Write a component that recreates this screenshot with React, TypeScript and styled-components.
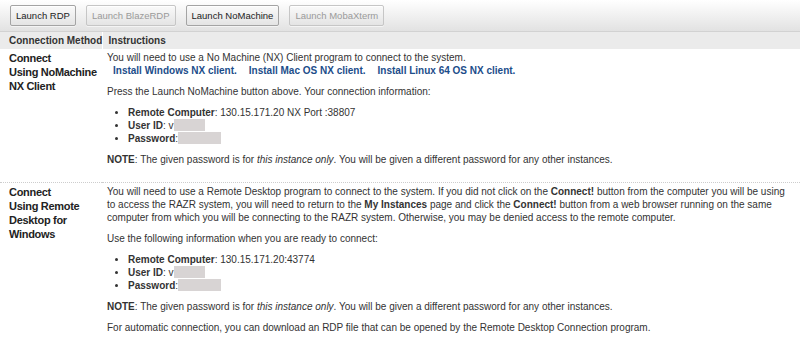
import React from "react";
import styled, { createGlobalStyle } from "styled-components";

const GlobalStyle = createGlobalStyle`
  html, body {
    margin: 0;
    padding: 0;
    background: #fff;
  }
  body {
    font-family: "Liberation Sans", Arial, sans-serif;
    font-size: 10px;
    color: #333;
  }
`;

export default function App() {
  return (
    <>
      <GlobalStyle />
      <Page>
        <Toolbar>
          <LaunchButton>Launch RDP</LaunchButton>
          <LaunchButton disabled>Launch BlazeRDP</LaunchButton>
          <LaunchButton>Launch NoMachine</LaunchButton>
          <LaunchButton disabled>Launch MobaXterm</LaunchButton>
        </Toolbar>

        <Table>
          <colgroup>
            <col style={{ width: 102 }} />
            <col />
          </colgroup>
          <thead>
            <tr>
              <Th $first>Connection Method</Th>
              <Th>Instructions</Th>
            </tr>
          </thead>
          <tbody>
            <Row>
              <MethodCell>
                Connect
                <br />
                Using NoMachine
                <br />
                NX Client
              </MethodCell>
              <InfoCell>
                <P>
                  You will need to use a No Machine (NX) Client program to connect to the system.
                  <br />
                  <Links>
                    <Link href="#">Install Windows NX client.</Link>
                    <Link href="#">Install Mac OS NX client.</Link>
                    <Link href="#">Install Linux 64 OS NX client.</Link>
                  </Links>
                </P>
                <P>Press the Launch NoMachine button above. Your connection information:</P>
                <List>
                  <li>
                    <b>Remote Computer</b>: 130.15.171.20 NX Port :38807
                  </li>
                  <li>
                    <b>User ID</b>: v<Redacted $w={31} />
                  </li>
                  <li>
                    <b>Password</b>:<Redacted $w={43} />
                  </li>
                </List>
                <P>
                  <b>NOTE</b>: The given password is for <i>this instance only</i>. You will be given a
                  different password for any other instances.
                </P>
              </InfoCell>
            </Row>
            <Row>
              <MethodCell>
                Connect
                <br />
                Using Remote
                <br />
                Desktop for
                <br />
                Windows
              </MethodCell>
              <InfoCell>
                <P>
                  You will need to use a Remote Desktop program to connect to the system. If you did not
                  click on the <b>Connect!</b> button from the computer you will be using to access the
                  RAZR system, you will need to return to the <b>My Instances</b> page and click the{" "}
                  <b>Connect!</b> button from a web browser running on the same computer from which you
                  will be connecting to the RAZR system. Otherwise, you may be denied access to the remote
                  computer.
                </P>
                <P>Use the following information when you are ready to connect:</P>
                <List>
                  <li>
                    <b>Remote Computer</b>: 130.15.171.20:43774
                  </li>
                  <li>
                    <b>User ID</b>: v<Redacted $w={31} />
                  </li>
                  <li>
                    <b>Password</b>:<Redacted $w={43} />
                  </li>
                </List>
                <P>
                  <b>NOTE</b>: The given password is for <i>this instance only</i>. You will be given a
                  different password for any other instances.
                </P>
                <P>
                  For automatic connection, you can download an RDP file that can be opened by the Remote
                  Desktop Connection program.
                </P>
              </InfoCell>
            </Row>
          </tbody>
        </Table>
      </Page>
    </>
  );
}

const Page = styled.div`
  width: 800px;
`;

const Toolbar = styled.div`
  display: flex;
  align-items: center;
  gap: 10px;
  height: 32px;
  padding: 0 10px 1px;
  box-sizing: border-box;
  background: linear-gradient(#ffffff, #e2e2e2);
  border-bottom: 1px solid #d2d2d2;
`;

const LaunchButton = styled.button`
  height: 21px;
  padding: 0 5px;
  font-family: inherit;
  font-size: 9.5px;
  color: ${(p) => (p.disabled ? "#9a9a9a" : "#222")};
  background: linear-gradient(#fafafa, #e4e4e4);
  border: 1px solid ${(p) => (p.disabled ? "#c6c6c6" : "#a4a4a4")};
  border-radius: 2px;
  box-shadow: inset 0 1px 0 #fff, 0 1px 0 #f4f4f4;
  cursor: ${(p) => (p.disabled ? "default" : "pointer")};
`;

const Table = styled.table`
  width: 100%;
  table-layout: fixed;
  border-collapse: collapse;
`;

const Th = styled.th<{ $first?: boolean }>`
  height: 17px;
  padding: 0 5px 0 ${(p) => (p.$first ? "9px" : "6px")};
  background: #ebebeb;
  text-align: left;
  font-weight: bold;
  color: #333;
  white-space: nowrap;
  border-right: ${(p) => (p.$first ? "1px solid #fff" : "none")};
`;

const Row = styled.tr`
  & + & > td {
    border-top: 1px dotted #cdcdcd;
  }
`;

const MethodCell = styled.td`
  vertical-align: top;
  padding: 2px 0 8px 9px;
  font-size: 11px;
  line-height: 14px;
  font-weight: bold;
  letter-spacing: -0.3px;
  white-space: nowrap;
  color: #222;
`;

const InfoCell = styled.td`
  vertical-align: top;
  padding: 2px 6px 8px 5px;
  line-height: 13px;
`;

const P = styled.p`
  margin: 0 0 8px;
`;

const Links = styled.span`
  display: inline-flex;
  gap: 12px;
  padding-left: 6px;
`;

const Link = styled.a`
  color: #1c4d8a;
  font-weight: bold;
  text-decoration: none;
`;

const List = styled.ul`
  margin: 0 0 8px;
  padding-left: 21px;

  li {
    line-height: 13px;
  }
`;

const Redacted = styled.span<{ $w: number }>`
  display: inline-block;
  width: ${(p) => p.$w}px;
  height: 12px;
  vertical-align: -2px;
  background: #d8d4d4;
`;
